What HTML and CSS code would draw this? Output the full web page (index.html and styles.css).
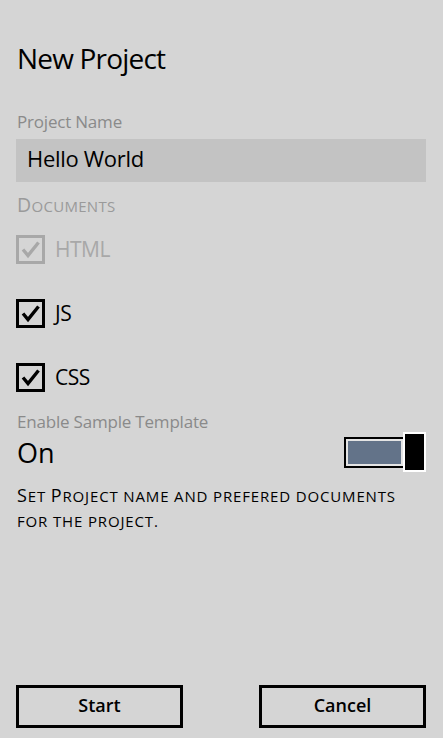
FILE: index.html
```html
<!DOCTYPE html>
<html lang="en">
<head>
    <meta charset="UTF-8">
    <meta name="viewport" content="width=device-width, initial-scale=1.0">
    <title>New Project</title>
    <link rel="stylesheet" href="styles.css">
</head>
<body>
    <div class="page">
        <h1 class="title">New Project</h1>

        <label class="field-label" for="project-name">Project Name</label>
        <div class="textbox" id="project-name">Hello World</div>

        <!-- small caps: capitals get the .cap span, the rest is uppercased smaller -->
        <div class="group-label"><span class="cap">D</span>ocuments</div>
        <ul class="doc-list">
            <li class="check disabled">
                <span class="box">
                    <svg viewBox="0 0 23 23" width="23" height="23"><polyline points="4,11.5 9,17.5 19.5,4.5"/></svg>
                </span>
                HTML
            </li>
            <li class="check">
                <span class="box">
                    <svg viewBox="0 0 23 23" width="23" height="23"><polyline points="4,11.5 9,17.5 19.5,4.5"/></svg>
                </span>
                JS
            </li>
            <li class="check">
                <span class="box">
                    <svg viewBox="0 0 23 23" width="23" height="23"><polyline points="4,11.5 9,17.5 19.5,4.5"/></svg>
                </span>
                CSS
            </li>
        </ul>

        <div class="field-label toggle-label">Enable Sample Template</div>
        <div class="toggle-row">
            <span class="toggle-state">On</span>
            <span class="toggle">
                <span class="track"><span class="fill"></span></span>
                <span class="thumb"></span>
            </span>
        </div>

        <p class="hint"><span class="cap">S</span>et <span class="cap">P</span>roject name and prefered documents for the project.</p>

        <div class="actions">
            <button>Start</button>
            <button>Cancel</button>
        </div>
    </div>
</body>
</html>
```

FILE: styles.css
```css
* {
    box-sizing: border-box;
}
body {
    margin: 0;
    background: #d5d5d5;
    font-family: "Open Sans", "Noto Sans", sans-serif;
    color: #000;
}
.page {
    height: 738px;
    display: flex;
    flex-direction: column;
    padding: 41px 17px 10px 16px;
}
.title {
    margin: 0 0 0 1px;
    font-size: 28px;
    font-weight: 400;
    line-height: 34px;
    letter-spacing: -0.8px;
}
.field-label {
    display: block;
    margin: 36px 0 0 1px;
    font-size: 17px;
    line-height: 22px;
    letter-spacing: -0.2px;
    color: #8a8a8a;
}
.textbox {
    margin-top: 6px;
    height: 43px;
    padding: 0 0 4px 11px;
    background: #c3c3c3;
    font-size: 22px;
    line-height: 39px;
    letter-spacing: -0.3px;
}
.group-label {
    margin: 13px 0 0 1px;
    font-size: 15px;
    line-height: 22px;
    text-transform: uppercase;
    letter-spacing: 0.3px;
    color: #9a9a9a;
}
.group-label .cap {
    font-size: 19.5px;
    line-height: 1;
}
.doc-list {
    list-style: none;
    margin: 18px 0 0;
    padding: 0;
    display: flex;
    flex-direction: column;
    gap: 35px;
}
.check {
    display: flex;
    align-items: center;
    height: 29px;
    font-size: 21px;
    line-height: 29px;
    letter-spacing: -0.5px;
}
.check .box {
    width: 29px;
    height: 29px;
    border: 3px solid #000;
    margin-right: 10px;
}
.check svg {
    display: block;
    fill: none;
    stroke: #000;
    stroke-width: 3.4;
}
.check.disabled {
    color: #a8a8a8;
}
.check.disabled .box {
    border-color: #a8a8a8;
}
.check.disabled svg {
    stroke: #a8a8a8;
}
.toggle-label {
    margin-top: 19px;
    line-height: 21px;
}
.toggle-row {
    display: flex;
    justify-content: space-between;
    align-items: center;
    height: 40px;
}
.toggle-state {
    margin: 1px 0 0 1px;
    font-size: 27px;
    line-height: 40px;
}
.toggle {
    display: flex;
    align-items: center;
}
.track {
    width: 61px;
    height: 31px;
    border: 2px solid #000;
    padding: 2px;
    background: #e4e4e4;
}
.fill {
    display: block;
    height: 100%;
    background: #637389;
}
.thumb {
    width: 23px;
    height: 40px;
    margin-left: -2px;
    background: #000;
    border: 2px solid #fff;
}
.hint {
    margin: 12px 0 0 1px;
    padding-right: 10px;
    font-size: 15px;
    line-height: 25px;
    text-transform: uppercase;
    letter-spacing: 0.85px;
}
.hint .cap {
    font-size: 18px;
    line-height: 1;
}
.actions {
    margin-top: auto;
    display: flex;
    justify-content: space-between;
}
button {
    width: 167px;
    height: 43px;
    border: 3px solid #000;
    background: transparent;
    font-family: inherit;
    font-size: 18px;
    font-weight: 600;
    color: #000;
    padding: 0 0 3px;
}
```
